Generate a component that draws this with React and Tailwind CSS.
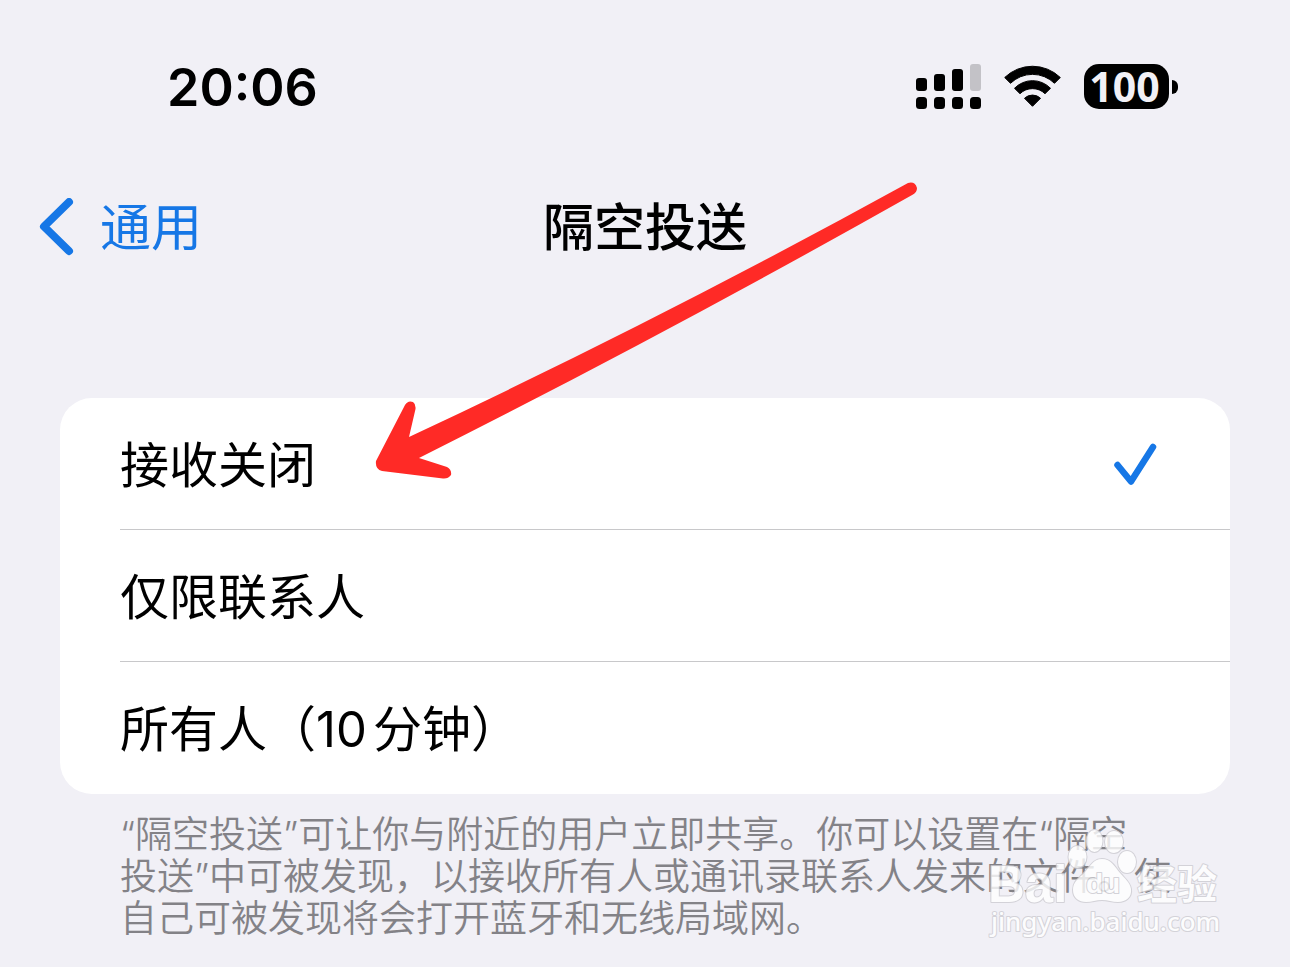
import { useState } from "react";

const OPTIONS = [
  { id: "off", label: "接收关闭" },
  { id: "contacts", label: "仅限联系人" },
  { id: "everyone", label: "所有人（10分钟）" },
];

const App = () => {
  const [selected, setSelected] = useState("off");

  return (
    <div className="relative min-h-screen overflow-hidden bg-[#f1f0f6] pb-6 font-[Inter,'Noto_Sans_CJK_SC',sans-serif] text-black">
      <StatusBar />

      <header className="mt-20 grid h-16 grid-cols-[1fr_auto_1fr] items-center px-9 text-[51px] leading-16">
        <a href="#general" className="flex items-center gap-6 text-[#1677e6]">
          <BackIcon />
          通用
        </a>
        <h1 className="font-medium">隔空投送</h1>
      </header>

      <main className="mt-[138px] px-[60px]">
        <fieldset
          aria-label="隔空投送"
          className="overflow-hidden rounded-[32px] bg-white"
        >
          {OPTIONS.map((option) => (
            <OptionRow
              key={option.id}
              option={option}
              checked={selected === option.id}
              onChange={() => setSelected(option.id)}
            />
          ))}
        </fieldset>

        <div className="relative mt-5 pl-[60px]">
          <p className="text-[37px] leading-[42px] font-[350] whitespace-nowrap text-[#838287]">
            “隔空投送”可让你与附近的用户立即共享。你可以设置在“隔空
            <br />
            投送”中可被发现，以接收所有人或通讯录联系人发来的文件。使
            <br />
            自己可被发现将会打开蓝牙和无线局域网。
          </p>
          <Watermark />
        </div>
      </main>

      <Arrow />
    </div>
  );
};

const StatusBar = () => {
  return (
    <div className="flex items-start justify-between pt-[60px] pr-28 pl-[167px]">
      <time className="text-[52px] leading-14 font-semibold">20:06</time>

      <div className="flex items-center gap-[23px] pt-1">
        <SignalIcon />
        <WifiIcon />
        <div className="flex items-center gap-[3px]">
          <span className="flex h-[45px] w-[85px] items-center justify-center rounded-[15px] bg-black pr-1 font-['Noto_Sans',sans-serif] text-[41px] font-bold text-[#f1f0f6]">
            100
          </span>
          <span className="h-[14px] w-[6px] rounded-r-full bg-black" />
        </div>
      </div>
    </div>
  );
};

const OptionRow = ({ option, checked, onChange }) => {
  return (
    <label className="ml-[60px] flex h-33 items-center justify-between border-b border-[#c8c8ca] pr-[72px] text-[49px] [text-autospace:normal] last:border-b-0">
      <span className="pt-1">{option.label}</span>
      <span className="grid size-11 place-items-center">
        <input
          type="radio"
          name="airdrop"
          checked={checked}
          onChange={onChange}
          className="peer col-start-1 row-start-1 size-11 appearance-none"
        />
        <span className="pointer-events-none invisible col-start-1 row-start-1 peer-checked:visible">
          <CheckIcon />
        </span>
      </span>
    </label>
  );
};

const BackIcon = () => (
  <svg width="40" height="60" viewBox="0 0 40 60" fill="none">
    <path
      d="M33 4 8 28.500 33 53"
      stroke="currentColor"
      strokeWidth="8"
      strokeLinecap="round"
      strokeLinejoin="round"
    />
  </svg>
);

const CheckIcon = () => (
  <svg width="44" height="44" viewBox="0 0 44 44" fill="none">
    <path
      d="M3.500 23 17 39.500 39 5"
      stroke="#1677e6"
      strokeWidth="6.500"
      strokeLinecap="round"
      strokeLinejoin="round"
    />
  </svg>
);

const SignalIcon = () => (
  <svg width="65" height="45" viewBox="0 0 65 45">
    <rect x="0" y="14" width="11" height="13" rx="3" />
    <rect x="18" y="10" width="11" height="17" rx="3" />
    <rect x="36" y="5" width="11" height="22" rx="3" />
    <rect x="54" y="0" width="11" height="27" rx="3" fill="#c3c2c7" />
    <rect x="0" y="33" width="11" height="12" rx="3.500" />
    <rect x="18" y="33" width="11" height="12" rx="3.500" />
    <rect x="36" y="33" width="11" height="12" rx="3.500" />
    <rect x="54" y="33" width="11" height="12" rx="3.500" />
  </svg>
);

const WifiIcon = () => (
  <svg
    width="57"
    height="45"
    viewBox="0 0 57 45"
    stroke="black"
    strokeWidth="1"
    strokeLinejoin="round"
  >
    <path d="M.7 13.500A40 40 0 0 1 56.300 13.500L50.500 19.300A31.500 31.500 0 0 0 6.500 19.300Z" />
    <path d="M10.500 24.300A25 25 0 0 1 46.500 24.300L41 29.700A18 18 0 0 0 16 29.700Z" />
    <path d="M20.500 34.300A11.500 11.500 0 0 1 36.500 34.300L28.500 42.300Z" />
  </svg>
);

const Arrow = () => (
  <svg
    className="pointer-events-none absolute top-[180px] left-[374px]"
    width="546"
    height="302"
    viewBox="0 0 546 302"
    fill="#ff2a26"
  >
    <path d="M534 3Q541 1 543 8Q543 12 539 14.500Q290 155 45 278L73 287Q78 290 77 295Q74 299 69 298.500L8 291Q1 289 2 281L31 225Q34 220 39 222Q42 224 41.500 229L35 257Q285 140 534 3Z" />
  </svg>
);

const Watermark = () => (
  <svg
    className="pointer-events-none absolute top-3 right-2"
    width="234"
    height="116"
    viewBox="0 0 234 116"
    fill="white"
    stroke="#cccbd1"
    strokeWidth="2"
    strokeLinejoin="round"
    paintOrder="stroke"
    opacity="0.8"
  >
    <text
      x="0"
      y="76"
      fontSize="51"
      fontFamily="Liberation Sans, sans-serif"
      fontWeight="700"
    >
      Bai
    </text>
    <text
      x="149"
      y="73"
      fontSize="40"
      fontFamily="Noto Sans CJK SC, sans-serif"
      fontWeight="700"
    >
      经验
    </text>
    <ellipse cx="89.500" cy="31" rx="9" ry="11" />
    <ellipse cx="106.500" cy="15" rx="8" ry="11" />
    <ellipse cx="126" cy="16" rx="9" ry="11" />
    <ellipse cx="139" cy="36" rx="9" ry="11" />
    <path d="M114 33C105 33 102 41 96 47C90 53 85 56 85 64C85 72 91 76 98 76C104 76 108 74 114 74C120 74 124 76 130 76C138 76 144 71 143 63C142 56 137 53 132 47C127 41 123 33 114 33Z" />
    <text
      x="98"
      y="67"
      fontSize="28"
      fontFamily="Liberation Sans, sans-serif"
      fontWeight="700"
    >
      du
    </text>
    <text x="3" y="105" fontSize="26" fontFamily="Noto Sans, sans-serif" fontWeight="500">
      jingyan.baidu.com
    </text>
  </svg>
);

export default App;
